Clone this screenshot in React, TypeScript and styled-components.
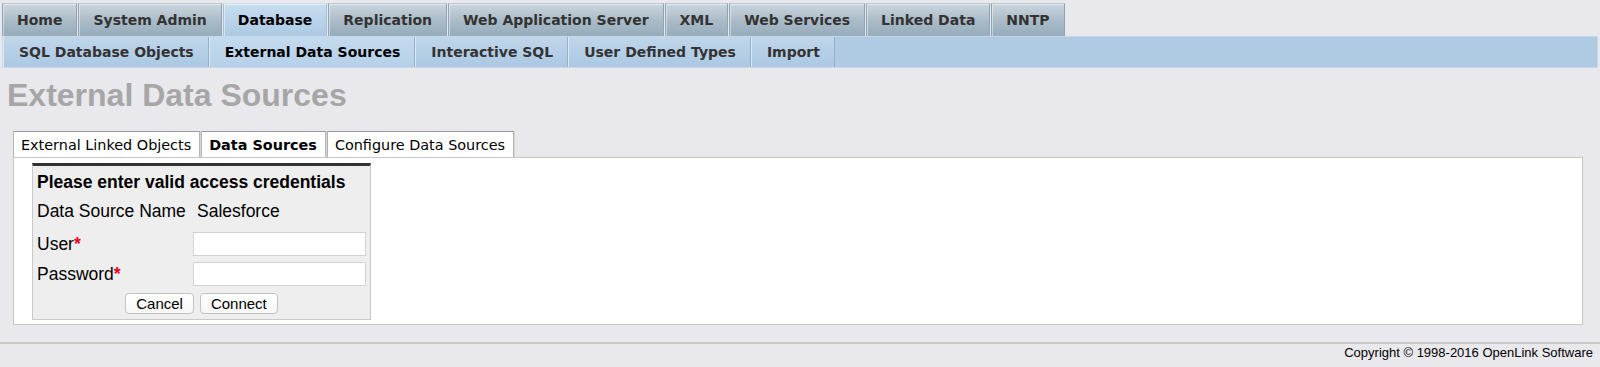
import React from "react";
import styled, { createGlobalStyle } from "styled-components";

const GlobalStyle = createGlobalStyle`
  html, body {
    margin: 0;
    padding: 0;
    background: #e9e8ed;
    font-family: "Liberation Sans", Arial, sans-serif;
    color: #000;
  }
`;

const Page = styled.div`
  width: 1600px;
  height: 367px;
  overflow: hidden;
`;

const TopNav = styled.div`
  display: flex;
  padding: 3px 2px 0;
`;

const TopTab = styled.div<{ $active?: boolean }>`
  box-sizing: border-box;
  height: 33px;
  margin-right: 1px;
  padding: 0 14px;
  display: flex;
  align-items: center;
  font-family: "DejaVu Sans", Verdana, sans-serif;
  font-weight: bold;
  font-size: 14px;
  color: ${(p) => (p.$active ? "#000" : "#333")};
  background: ${(p) =>
    p.$active
      ? "linear-gradient(#c8ddef, #b9d3ea 50%, #adcae3)"
      : "linear-gradient(#cbd6de, #abbcc8 50%, #95acbc)"};
  border: 1px solid ${(p) => (p.$active ? "#a6bfd3" : "#8ea4b5")};
  border-top-color: ${(p) => (p.$active ? "#cfdeeb" : "#b8c6d0")};
  border-bottom: none;
  box-shadow: inset 1px 1px 0 rgba(255, 255, 255, 0.45);
`;

const SubNav = styled.div`
  box-sizing: border-box;
  display: flex;
  height: 32px;
  margin: 0 2px;
  background: #aecbe3;
  border: 1px solid #c8d8e6;
`;

const SubTab = styled.div<{ $active?: boolean }>`
  display: flex;
  align-items: center;
  padding: 0 14px 0 15px;
  font-family: "DejaVu Sans", Verdana, sans-serif;
  font-weight: bold;
  font-size: 14px;
  color: ${(p) => (p.$active ? "#000" : "#333")};
  background: ${(p) =>
    p.$active
      ? "linear-gradient(#c4daee, #b4d0e8)"
      : "linear-gradient(#bfd6ea, #abc8e2)"};
  border-left: 1px solid #dce8f3;
  border-right: 1px solid #96afc4;
`;

const Heading = styled.h1`
  margin: 9px 0 0;
  padding-left: 7px;
  font-family: "Liberation Sans", Arial, sans-serif;
  font-size: 32px;
  line-height: 36px;
  font-weight: bold;
  color: #a6a6a6;
`;

const PanelTabs = styled.div`
  display: flex;
  margin: 18px 0 0 13px;
  position: relative;
  z-index: 1;
`;

const PanelTab = styled.div<{ $active?: boolean }>`
  box-sizing: border-box;
  height: 26px;
  display: flex;
  align-items: center;
  padding: 0 8px 0 7px;
  font-family: "DejaVu Sans", Verdana, sans-serif;
  font-size: 14.4px;
  font-weight: ${(p) => (p.$active ? "bold" : "normal")};
  color: #000;
  background: #fff;
  border: 1px solid #b3b3b3;
  border-top-color: #9a9a9a;
  border-bottom: none;
  box-shadow: 1px 0 0 #d6d6d6;
  margin-right: 1px;
`;

const Panel = styled.div`
  box-sizing: border-box;
  height: 168px;
  margin: 0 17px 0 13px;
  padding: 5px 18px 4px;
  background: #fff;
  border: 1px solid #c6c6c6;
`;

const LoginBox = styled.div`
  box-sizing: border-box;
  width: 339px;
  height: 157px;
  padding: 4px 4px 0;
  background: #eee;
  border: 1px solid #c9c9c9;
  border-top: 3px solid #333;
  display: grid;
  grid-template-columns: 156px 173px;
  grid-template-rows: 24px 34px 32px 28px 31px;
  align-items: center;
  font-size: 17.5px;
`;

const BoxTitle = styled.div`
  grid-column: 1 / span 2;
  font-weight: bold;
  line-height: 24px;
`;

const Label = styled.div`
  line-height: 24px;
`;

const Value = styled.div`
  line-height: 24px;
  padding-left: 4px;
`;

const Required = styled.span`
  color: #f0001c;
  font-weight: bold;
`;

const TextInput = styled.input`
  box-sizing: border-box;
  width: 173px;
  height: 24px;
  margin: 0;
  border: 1px solid #d2d2d2;
  background: #fff;
  border-radius: 0;
  outline: none;
`;

const Buttons = styled.div`
  grid-column: 1 / span 2;
  display: flex;
  justify-content: center;
  gap: 6px;
`;

const Button = styled.button`
  box-sizing: border-box;
  height: 21px;
  padding: 0 10px;
  font-family: "Liberation Sans", Arial, sans-serif;
  font-size: 15px;
  color: #000;
  background: linear-gradient(#fff, #f7f7f7);
  border: 1px solid #c3c3c3;
  border-radius: 4px;
  line-height: 19px;
`;

const Footer = styled.div`
  margin-top: 17px;
  border-top: 2px solid #c8c8c8;
  padding: 1px 7px 0 0;
  text-align: right;
  font-size: 13px;
  line-height: 15px;
`;

const topTabs = [
  "Home",
  "System Admin",
  "Database",
  "Replication",
  "Web Application Server",
  "XML",
  "Web Services",
  "Linked Data",
  "NNTP",
];

const subTabs = [
  "SQL Database Objects",
  "External Data Sources",
  "Interactive SQL",
  "User Defined Types",
  "Import",
];

const panelTabs = ["External Linked Objects", "Data Sources", "Configure Data Sources"];

export default function App() {
  return (
    <Page>
      <GlobalStyle />
      <TopNav>
        {topTabs.map((t) => (
          <TopTab key={t} $active={t === "Database"}>
            {t}
          </TopTab>
        ))}
      </TopNav>
      <SubNav>
        {subTabs.map((t) => (
          <SubTab key={t} $active={t === "External Data Sources"}>
            {t}
          </SubTab>
        ))}
      </SubNav>
      <Heading>External Data Sources</Heading>
      <PanelTabs>
        {panelTabs.map((t) => (
          <PanelTab key={t} $active={t === "Data Sources"}>
            {t}
          </PanelTab>
        ))}
      </PanelTabs>
      <Panel>
        <LoginBox>
          <BoxTitle>Please enter valid access credentials</BoxTitle>
          <Label>Data Source Name</Label>
          <Value>Salesforce</Value>
          <Label>
            User<Required>*</Required>
          </Label>
          <TextInput type="text" />
          <Label>
            Password<Required>*</Required>
          </Label>
          <TextInput type="password" />
          <Buttons>
            <Button>Cancel</Button>
            <Button>Connect</Button>
          </Buttons>
        </LoginBox>
      </Panel>
      <Footer>Copyright © 1998-2016 OpenLink Software</Footer>
    </Page>
  );
}
